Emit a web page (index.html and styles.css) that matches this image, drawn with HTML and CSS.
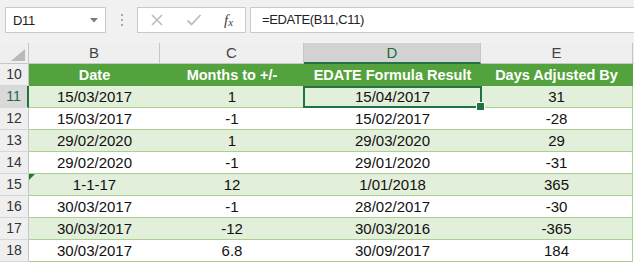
FILE: index.html
```html
<!DOCTYPE html>
<html>
<head>
<meta charset="utf-8">
<link rel="stylesheet" href="styles.css">
</head>
<body>
<div class="toolbar">
  <div class="namebox">
    <span class="nb-text">D11</span>
    <svg class="nb-arrow" width="8" height="5" viewBox="0 0 8 5"><polygon points="0,0 8,0 4,4.5" fill="#7a7a7a"/></svg>
  </div>
  <div class="dots"><i></i><i></i><i></i></div>
  <div class="fxbox">
    <svg class="ico" width="14" height="14" viewBox="0 0 14 14"><path d="M2 2 L12 12 M12 2 L2 12" stroke="#bdbdbd" stroke-width="1.6" fill="none"/></svg>
    <svg class="ico" width="16" height="14" viewBox="0 0 16 14"><path d="M1.5 7.5 L5.5 11.5 L14.5 2" stroke="#bdbdbd" stroke-width="1.8" fill="none"/></svg>
    <span class="fx">f<sub>x</sub></span>
  </div>
  <div class="formula">=EDATE(B11,C11)</div>
</div>
<div class="sheet">
  <div class="corner"><svg width="14" height="12" viewBox="0 0 14 12"><polygon points="14,0 14,12 0,12" fill="#b9b9b9"/></svg></div>
  <div class="ch">B</div>
  <div class="ch">C</div>
  <div class="ch ch-sel">D</div>
  <div class="ch">E</div>
  <div class="ch ch-rest"></div>

  <div class="rh">10</div>
  <div class="hd">Date</div>
  <div class="hd">Months to +/-</div>
  <div class="hd">EDATE Formula Result</div>
  <div class="hd hd-last">Days Adjusted By</div>
  <div class="rest"></div>

  <div class="rh rh-sel">11</div>
  <div class="c band">15/03/2017</div>
  <div class="c band">1</div>
  <div class="c band sel">15/04/2017</div>
  <div class="c band last">31</div>
  <div class="rest"></div>

  <div class="rh">12</div>
  <div class="c">15/03/2017</div>
  <div class="c">-1</div>
  <div class="c">15/02/2017</div>
  <div class="c last">-28</div>
  <div class="rest"></div>

  <div class="rh">13</div>
  <div class="c band">29/02/2020</div>
  <div class="c band">1</div>
  <div class="c band">29/03/2020</div>
  <div class="c band last">29</div>
  <div class="rest"></div>

  <div class="rh">14</div>
  <div class="c">29/02/2020</div>
  <div class="c">-1</div>
  <div class="c">29/01/2020</div>
  <div class="c last">-31</div>
  <div class="rest"></div>

  <div class="rh">15</div>
  <div class="c band flag">1-1-17</div>
  <div class="c band">12</div>
  <div class="c band">1/01/2018</div>
  <div class="c band last">365</div>
  <div class="rest"></div>

  <div class="rh">16</div>
  <div class="c">30/03/2017</div>
  <div class="c">-1</div>
  <div class="c">28/02/2017</div>
  <div class="c last">-30</div>
  <div class="rest"></div>

  <div class="rh">17</div>
  <div class="c band">30/03/2017</div>
  <div class="c band">-12</div>
  <div class="c band">30/03/2016</div>
  <div class="c band last">-365</div>
  <div class="rest"></div>

  <div class="rh">18</div>
  <div class="c">30/03/2017</div>
  <div class="c">6.8</div>
  <div class="c">30/09/2017</div>
  <div class="c last">184</div>
  <div class="rest"></div>
</div>
</body>
</html>
```

FILE: styles.css
```css
* { box-sizing: border-box; }
html, body { margin: 0; padding: 0; }
body {
  width: 634px;
  height: 263px;
  overflow: hidden;
  background: #ffffff;
  font-family: "Liberation Sans", Arial, sans-serif;
  color: #1a1a1a;
}

.toolbar {
  height: 43px;
  background: #f1f1f1;
  display: flex;
  align-items: flex-start;
  padding: 7px 0 0 5px;
}
.namebox {
  width: 101px;
  height: 26px;
  background: #fff;
  border: 1px solid #c9c9c9;
  display: flex;
  align-items: center;
  justify-content: space-between;
  padding: 0 7px 0 7px;
}
.nb-text {
  font-size: 13px;
  letter-spacing: -0.3px;
  color: #222;
}
.nb-arrow { margin-top: 0; }
.dots {
  width: 31px;
  height: 26px;
  display: flex;
  flex-direction: column;
  align-items: center;
  justify-content: center;
  gap: 3px;
}
.dots i {
  display: block;
  width: 2px;
  height: 2px;
  background: #a8a8a8;
}
.fxbox {
  width: 109px;
  height: 26px;
  background: #fff;
  border: 1px solid #c9c9c9;
  display: flex;
  align-items: center;
  padding-left: 12px;
}
.ico { display: block; }
.ico + .ico { margin-left: 22px; }
.fx {
  margin-left: 22px;
  font-family: "Liberation Serif", "Times New Roman", serif;
  font-style: italic;
  font-size: 15px;
  color: #444;
  line-height: 1;
}
.fx sub {
  font-size: 11px;
  vertical-align: -1px;
}
.formula {
  flex: 1;
  height: 26px;
  margin-left: 4px;
  margin-right: -2px;
  background: #fff;
  border: 1px solid #c9c9c9;
  padding-left: 11px;
  font-size: 13px;
  letter-spacing: -0.35px;
  line-height: 24px;
  color: #222;
}

.sheet {
  display: grid;
  grid-template-columns: 29px 131px 144px 177px 152px 1fr;
  grid-template-rows: 21px repeat(9, 22px);
}

.corner {
  background: #efefef;
  border-right: 1px solid #c6c6c6;
  border-bottom: 1px solid #c6c6c6;
  display: flex;
  align-items: flex-end;
  justify-content: flex-end;
  padding: 0 3px 2px 0;
}
.corner svg { display: block; }
.ch {
  background: #efefef;
  border-right: 1px solid #c6c6c6;
  border-bottom: 1px solid #c6c6c6;
  font-size: 15px;
  color: #444;
  text-align: center;
  line-height: 20px;
}
.ch-sel {
  background: #d3d3d3;
  color: #216a3e;
  border-bottom: 2px solid #217346;
}
.ch-rest { border-right: none; }

.rh {
  background: #efefef;
  border-right: 1px solid #c6c6c6;
  border-bottom: 1px solid #d6d6d6;
  font-size: 14px;
  color: #333;
  text-align: center;
  line-height: 21px;
}
.rh-sel {
  background: #d9d9d9;
  color: #216a3e;
  border-right: 2px solid #217346;
}

.hd {
  background: #53a23d;
  color: #ffffff;
  font-weight: bold;
  font-size: 14.5px;
  text-align: center;
  line-height: 22px;
  white-space: nowrap;
}
.hd-last { border-right: 1px solid #53a23d; }

.c {
  background: #ffffff;
  border-bottom: 1px solid #a9d08e;
  font-size: 15px;
  color: #111;
  text-align: center;
  line-height: 21px;
  white-space: nowrap;
}
.c.band { background: #e2efda; }
.c.last { border-right: 1px solid #a9d08e; }

.rest { background: #ffffff; }

.sel { position: relative; z-index: 2; }
.sel::before {
  content: "";
  position: absolute;
  left: -1px;
  top: 0;
  right: -1px;
  bottom: -1px;
  border: 2px solid #217346;
}
.sel::after {
  content: "";
  position: absolute;
  right: -4px;
  bottom: -4px;
  width: 7px;
  height: 7px;
  background: #217346;
  border: 1px solid #ffffff;
}

.flag { position: relative; }
.flag::before {
  content: "";
  position: absolute;
  left: 0;
  top: 0;
  border-top: 6px solid #1e7a2e;
  border-right: 6px solid transparent;
}
```
